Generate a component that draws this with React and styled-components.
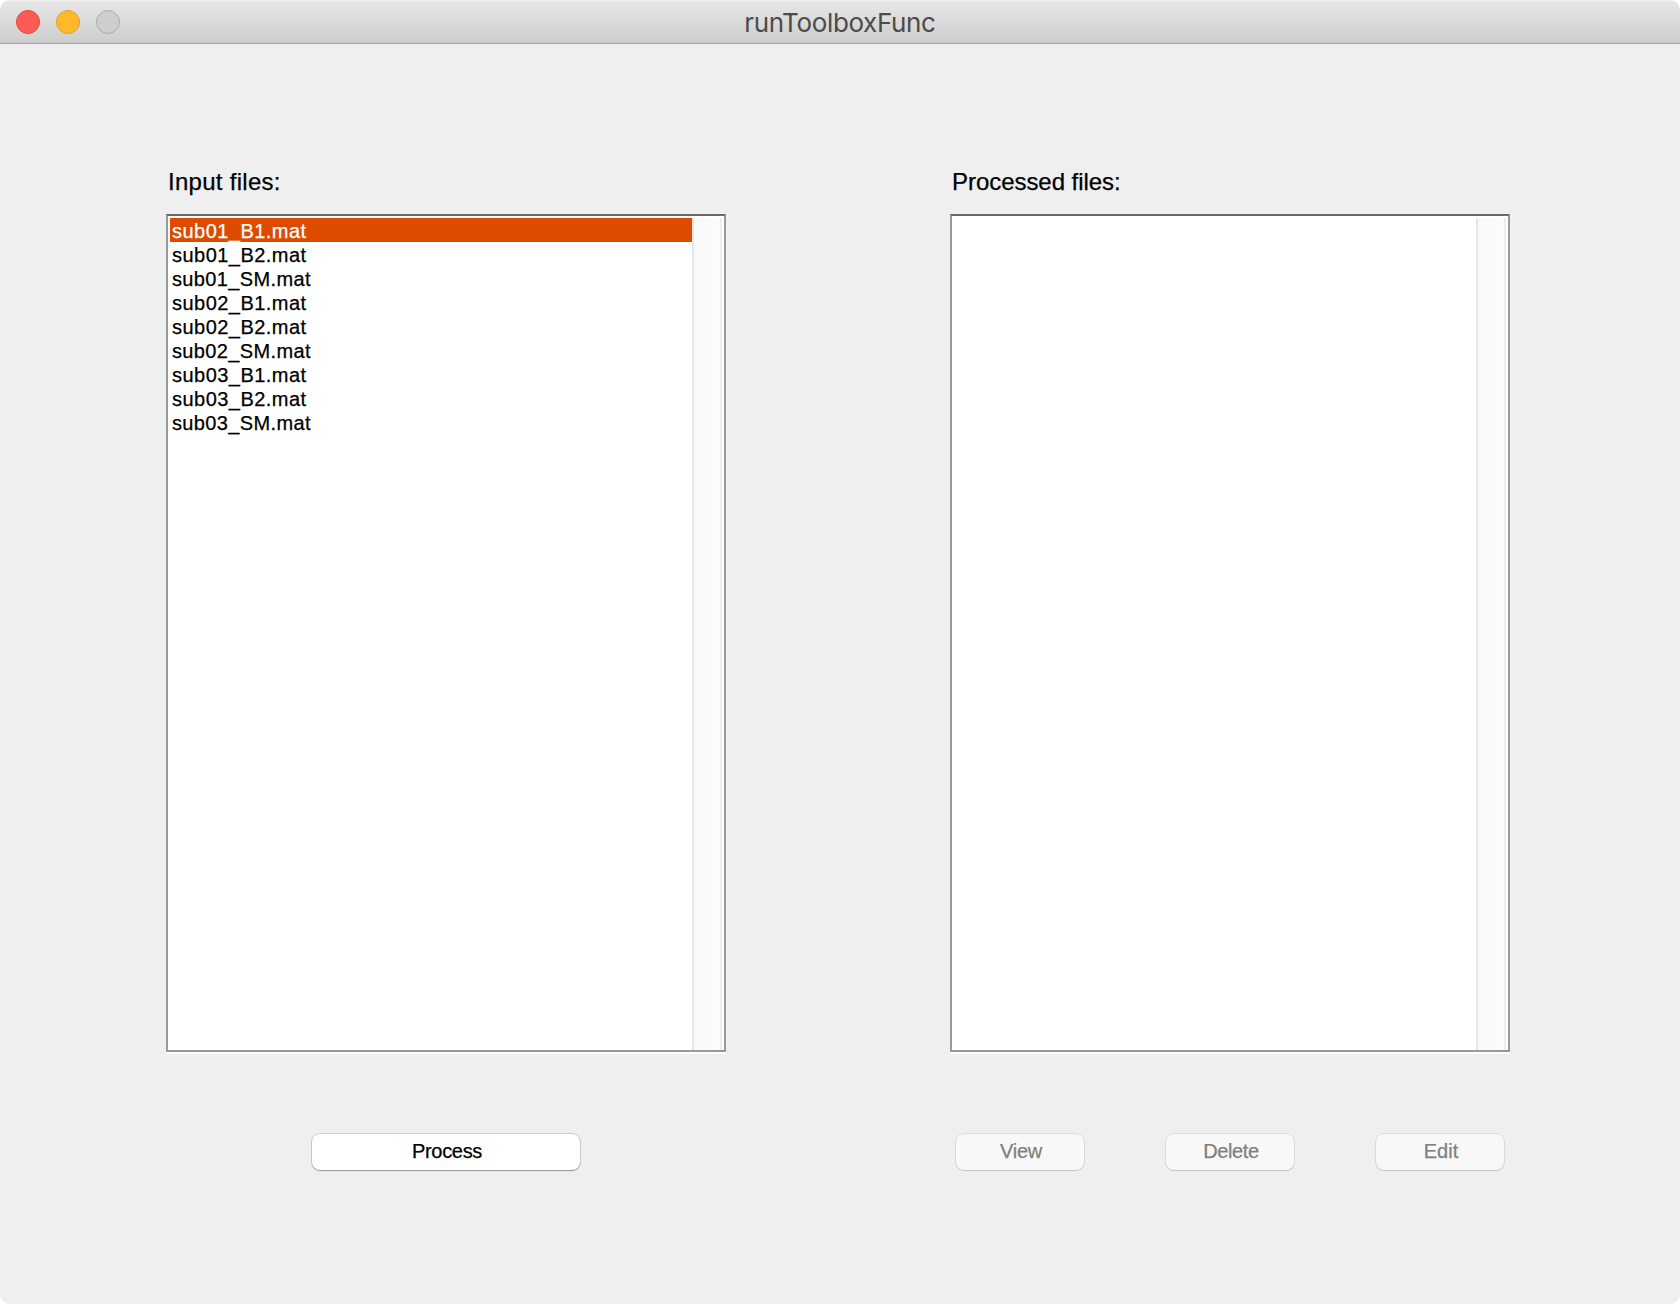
import React from "react";
import styled, { createGlobalStyle } from "styled-components";

const GlobalStyle = createGlobalStyle`
  * { box-sizing: border-box; }
  body { margin: 0; background: #fff; }
`;

const Window = styled.div`
  width: 1680px;
  height: 1304px;
  display: flex;
  flex-direction: column;
  overflow: hidden;
  border-radius: 10px;
  background: #efefef;
  font-family: "Liberation Sans", Arial, sans-serif;
  color: #000;
`;

const TitleBar = styled.header`
  height: 44px;
  flex: none;
  display: grid;
  grid-template-columns: 1fr auto 1fr;
  align-items: center;
  padding: 1px 16px 0;
  border-bottom: 1px solid #a6a6a6;
  background: linear-gradient(#f4f4f4 0, #e6e6e6 2px, #cecece 42px, #bcbcbc 43px);
`;

const Lights = styled.div`
  display: flex;
  gap: 16px;
`;

const Light = styled.span`
  width: 24px;
  height: 24px;
  border-radius: 50%;
  background: ${(p) => p.$fill};
  border: 1px solid ${(p) => p.$edge};
`;

const Title = styled.h1`
  margin: 0;
  padding-top: 2px;
  font: 400 26px/30px Inter, sans-serif;
  letter-spacing: ${(p) => p.$track}px;
  color: #4b4b4b;
`;

const Body = styled.main`
  flex: 1;
  display: flex;
  gap: 224px;
  padding: 122px 0 0 166px;
`;

const Panel = styled.section`
  width: 560px;
  display: flex;
  flex-direction: column;
`;

const Label = styled.label`
  height: 48px;
  padding: 2px 0 0 2px;
  font-size: 24px;
  line-height: 28px;
  letter-spacing: ${(p) => p.$track}px;
  -webkit-text-stroke: 0.25px currentColor;
  white-space: nowrap;
`;

const ListBox = styled.div`
  height: 838px;
  display: flex;
  padding: 2px 0 0 2px;
  background: #fff;
  border: 2px solid #999;
  border-top-color: #696969;
  box-shadow: 0 2px 0 #fff;
`;

const List = styled.ul`
  flex: 1;
  margin: 0;
  padding: 0;
  list-style: none;
`;

const Item = styled.li`
  height: 24px;
  padding-left: 2px;
  font-size: 20px;
  line-height: 26px;
  letter-spacing: ${(p) => p.$track}px;
  -webkit-text-stroke: 0.25px currentColor;
  white-space: nowrap;
  color: ${(p) => (p.$selected ? "#fff" : "#000")};
  background: ${(p) => (p.$selected ? "#dc4c00" : "transparent")};
`;

const ScrollTrack = styled.div`
  width: 30px;
  margin-right: 2px;
  border-left: 2px solid #e7e7e7;
  border-right: 2px solid #ededed;
  background: linear-gradient(90deg, #f9f9f9, #fcfcfc);
`;

const Actions = styled.div`
  display: flex;
  justify-content: ${(p) => (p.$centered ? "center" : "space-between")};
  padding: 82px 6px 0;
`;

const Button = styled.button`
  width: ${(p) => p.$width}px;
  height: 36px;
  padding: 0 0 2px 2px;
  border: 0;
  border-radius: 8px;
  background: #fff;
  box-shadow: 0 0 0 1px rgba(0, 0, 0, 0.14), 0 1px 1px rgba(0, 0, 0, 0.27);
  font: 20px/34px "Liberation Sans", Arial, sans-serif;
  letter-spacing: ${(p) => p.$track}px;
  -webkit-text-stroke: 0.25px currentColor;
  color: #000;

  &:disabled {
    background: #f8f8f8;
    color: #808080;
    box-shadow: 0 0 0 1px rgba(0, 0, 0, 0.08), 0 1px 1px rgba(0, 0, 0, 0.11);
  }
`;

const files = ["sub01", "sub02", "sub03"].flatMap((s) =>
  ["B1", "B2", "SM"].map((part) => `${s}_${part}.mat`)
);

function FileList({ items }) {
  return (
    <ListBox>
      <List>
        {items.map((name, i) => (
          <Item key={name} $selected={i === 0} $track={name.includes("SM") ? 0.36 : 0.46}>
            {name}
          </Item>
        ))}
      </List>
      <ScrollTrack />
    </ListBox>
  );
}

export default function App() {
  return (
    <>
      <GlobalStyle />
      <Window>
        <TitleBar>
          <Lights>
            <Light $fill="#ff5b54" $edge="#df4744" />
            <Light $fill="#ffb92a" $edge="#dda02f" />
            <Light $fill="#cecece" $edge="#ababab" />
          </Lights>
          <Title $track={-0.35}>runToolboxFunc</Title>
        </TitleBar>
        <Body>
          <Panel>
            <Label $track={0.28}>Input files:</Label>
            <FileList items={files} />
            <Actions $centered>
              <Button $width={268} $track={-0.3}>Process</Button>
            </Actions>
          </Panel>
          <Panel>
            <Label $track={-0.05}>Processed files:</Label>
            <FileList items={[]} />
            <Actions>
              <Button $width={128} $track={-0.3} disabled>View</Button>
              <Button $width={128} $track={-0.4} disabled>Delete</Button>
              <Button $width={128} $track={0} disabled>Edit</Button>
            </Actions>
          </Panel>
        </Body>
      </Window>
    </>
  );
}
